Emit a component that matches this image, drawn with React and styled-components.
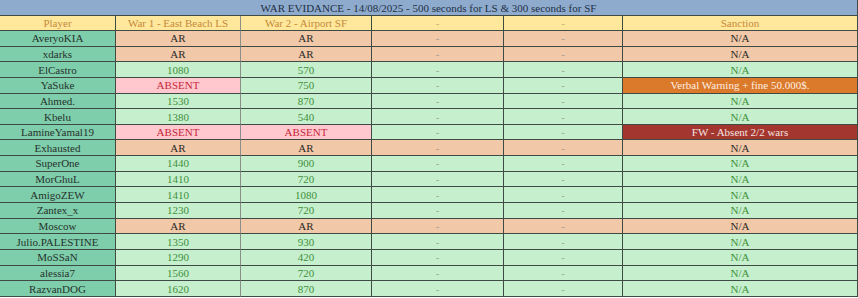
import { Fragment } from "react";
import styled, { createGlobalStyle } from "styled-components";

const Global = createGlobalStyle`
    body {
        margin: 0;
        background: #ffffff;
        font-family: "Liberation Serif", "DejaVu Serif", serif;
    }
`

const kinds = {
    title: { bg: '#8eabcd', color: '#1f2f45' },
    head: { bg: '#ffe79b', color: '#c48a3c' },
    player: { bg: '#7ecdab', color: '#26332c' },
    ar: { bg: '#f1c9a8', color: '#2c2a28' },
    ok: { bg: '#c6efce', color: '#3f8f3a' },
    absent: { bg: '#ffc7ce', color: '#c8283a' },
    dashOk: { bg: '#c6efce', color: '#9aa79a' },
    dashAr: { bg: '#f1c9a8', color: '#a89a8e' },
    dashHead: { bg: '#ffe79b', color: '#c9b070' },
    warn: { bg: '#dc7a2b', color: '#fbefe4' },
    fw: { bg: '#a3372f', color: '#f5e3e1' },
}

let Sheet = styled.div`
    display: grid;
    grid-template-columns: 116px 125px 131px 132px 119px 1fr;
    grid-template-rows: 16px 15px repeat(17, 15.65px);
    width: 858px;
    font-family: "Liberation Serif", "DejaVu Serif", serif;
    font-size: 11px;
`
let Cell = styled.div`
    display: flex;
    align-items: center;
    justify-content: center;
    box-sizing: border-box;
    white-space: nowrap;
    overflow: hidden;
    font-family: "Liberation Serif", "DejaVu Serif", serif;
    background-color: ${p => kinds[p.$kind].bg};
    color: ${p => kinds[p.$kind].color};
    border-bottom: 1px solid #3f4a44;
    border-right: 1px solid ${p => p.$soft ? '#8a8f8a' : '#3f4a44'};
    grid-column: ${p => p.$span ? '1 / -1' : 'auto'};
`

const rows = [
    ['AveryoKIA', 'AR', 'AR', 'N/A'],
    ['xdarks', 'AR', 'AR', 'N/A'],
    ['ElCastro', '1080', '570', 'N/A'],
    ['YaSuke', 'ABSENT', '750', 'Verbal Warning + fine 50.000$.'],
    ['Ahmed.', '1530', '870', 'N/A'],
    ['Kbelu', '1380', '540', 'N/A'],
    ['LamineYamal19', 'ABSENT', 'ABSENT', 'FW - Absent 2/2 wars'],
    ['Exhausted', 'AR', 'AR', 'N/A'],
    ['SuperOne', '1440', '900', 'N/A'],
    ['MorGhuL', '1410', '720', 'N/A'],
    ['AmigoZEW', '1410', '1080', 'N/A'],
    ['Zantex_x', '1230', '720', 'N/A'],
    ['Moscow', 'AR', 'AR', 'N/A'],
    ['Julio.PALESTINE', '1350', '930', 'N/A'],
    ['MoSSaN', '1290', '420', 'N/A'],
    ['alessia7', '1560', '720', 'N/A'],
    ['RazvanDOG', '1620', '870', 'N/A'],
]

const scoreKind = (v) => v === 'AR' ? 'ar' : v === 'ABSENT' ? 'absent' : 'ok'

const sanctionKind = (s, isAr) => {
    if (s.startsWith('Verbal')) return 'warn'
    if (s.startsWith('FW')) return 'fw'
    return isAr ? 'ar' : 'ok'
}

function App() {
    return (
        <>
            <Global />
            <Sheet>
                <Cell $kind="title" $span>WAR EVIDANCE - 14/08/2025 - 500 seconds for LS &amp; 300 seconds for SF</Cell>
                <Cell $kind="head">Player</Cell>
                <Cell $kind="head" $soft>War 1 - East Beach LS</Cell>
                <Cell $kind="head">War 2 - Airport SF</Cell>
                <Cell $kind="dashHead">-</Cell>
                <Cell $kind="dashHead">-</Cell>
                <Cell $kind="head">Sanction</Cell>
                {rows.map((r, i) => {
                    const isAr = r[1] === 'AR'
                    return (
                        <Fragment key={i}>
                            <Cell $kind="player">{r[0]}</Cell>
                            <Cell $kind={scoreKind(r[1])} $soft>{r[1]}</Cell>
                            <Cell $kind={scoreKind(r[2])}>{r[2]}</Cell>
                            <Cell $kind={isAr ? 'dashAr' : 'dashOk'}>-</Cell>
                            <Cell $kind={isAr ? 'dashAr' : 'dashOk'}>-</Cell>
                            <Cell $kind={sanctionKind(r[3], isAr)}>{r[3]}</Cell>
                        </Fragment>
                    )
                })}
            </Sheet>
        </>
    )
}

export default App
